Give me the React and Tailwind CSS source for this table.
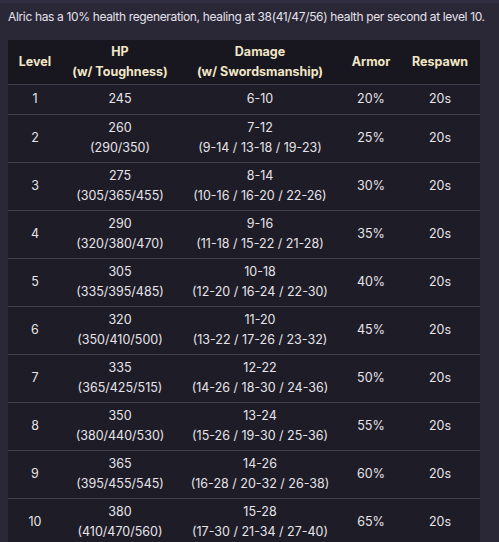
import React from 'react';

const rows = [
  { level: 1, hp: ['245'], dmg: ['6-10'], armor: '20%', respawn: '20s' },
  { level: 2, hp: ['260', '(290/350)'], dmg: ['7-12', '(9-14 / 13-18 / 19-23)'], armor: '25%', respawn: '20s' },
  { level: 3, hp: ['275', '(305/365/455)'], dmg: ['8-14', '(10-16 / 16-20 / 22-26)'], armor: '30%', respawn: '20s' },
  { level: 4, hp: ['290', '(320/380/470)'], dmg: ['9-16', '(11-18 / 15-22 / 21-28)'], armor: '35%', respawn: '20s' },
  { level: 5, hp: ['305', '(335/395/485)'], dmg: ['10-18', '(12-20 / 16-24 / 22-30)'], armor: '40%', respawn: '20s' },
  { level: 6, hp: ['320', '(350/410/500)'], dmg: ['11-20', '(13-22 / 17-26 / 23-32)'], armor: '45%', respawn: '20s' },
  { level: 7, hp: ['335', '(365/425/515)'], dmg: ['12-22', '(14-26 / 18-30 / 24-36)'], armor: '50%', respawn: '20s' },
  { level: 8, hp: ['350', '(380/440/530)'], dmg: ['13-24', '(15-26 / 19-30 / 25-36)'], armor: '55%', respawn: '20s' },
  { level: 9, hp: ['365', '(395/455/545)'], dmg: ['14-26', '(16-28 / 20-32 / 26-38)'], armor: '60%', respawn: '20s' },
  { level: 10, hp: ['380', '(410/470/560)'], dmg: ['15-28', '(17-30 / 21-34 / 27-40)'], armor: '65%', respawn: '20s' },
];

const Lines = ({ lines }) => (
  <>
    {lines.map((l, i) => (
      <div key={i}>{l}</div>
    ))}
  </>
);

const App = () => {
  return (
    <div
      className="min-h-[542px] w-[499px] bg-[#2a2737] border-t-[3px] border-[#332f42] pl-2 pt-[4px]"
      style={{ fontFamily: 'Inter, "Noto Sans", sans-serif' }}
    >
      <p className="whitespace-nowrap text-[12px] leading-[20px] text-[#e4e2ea] tracking-[-0.35px]">
        Alric has a 10% health regeneration, healing at 38(41/47/56) health per second at level 10.
      </p>

      <table className="mt-[13px] w-[472px] table-fixed border-collapse text-center text-[12.5px] leading-[20px] bg-[#1e1c27] text-[#e6e4ea]">
        <colgroup>
          <col className="w-[54px]" />
          <col className="w-[116px]" />
          <col className="w-[164px]" />
          <col className="w-[58px]" />
          <col className="w-[80px]" />
        </colgroup>
        <thead>
          <tr className="bg-[#18161f] text-[#f1e7c6] font-bold border-b border-[#423f50]">
            <th className="py-[2px]">Level</th>
            <th className="py-[2px]">
              <div>HP</div>
              <div>(w/ Toughness)</div>
            </th>
            <th className="py-[2px]">
              <div>Damage</div>
              <div>(w/ Swordsmanship)</div>
            </th>
            <th className="py-[2px]">Armor</th>
            <th className="py-[2px]">Respawn</th>
          </tr>
        </thead>
        <tbody>
          {rows.map((r) => (
            <tr key={r.level} className="border-b border-[#423f50]">
              <td className="h-[30px] pt-[3px] pb-[4px]">{r.level}</td>
              <td className="pt-[3px] pb-[4px]">
                <Lines lines={r.hp} />
              </td>
              <td className="pt-[3px] pb-[4px]">
                <Lines lines={r.dmg} />
              </td>
              <td className="pt-[3px] pb-[4px]">{r.armor}</td>
              <td className="pt-[3px] pb-[4px]">{r.respawn}</td>
            </tr>
          ))}
        </tbody>
      </table>
    </div>
  );
};

export default App;
